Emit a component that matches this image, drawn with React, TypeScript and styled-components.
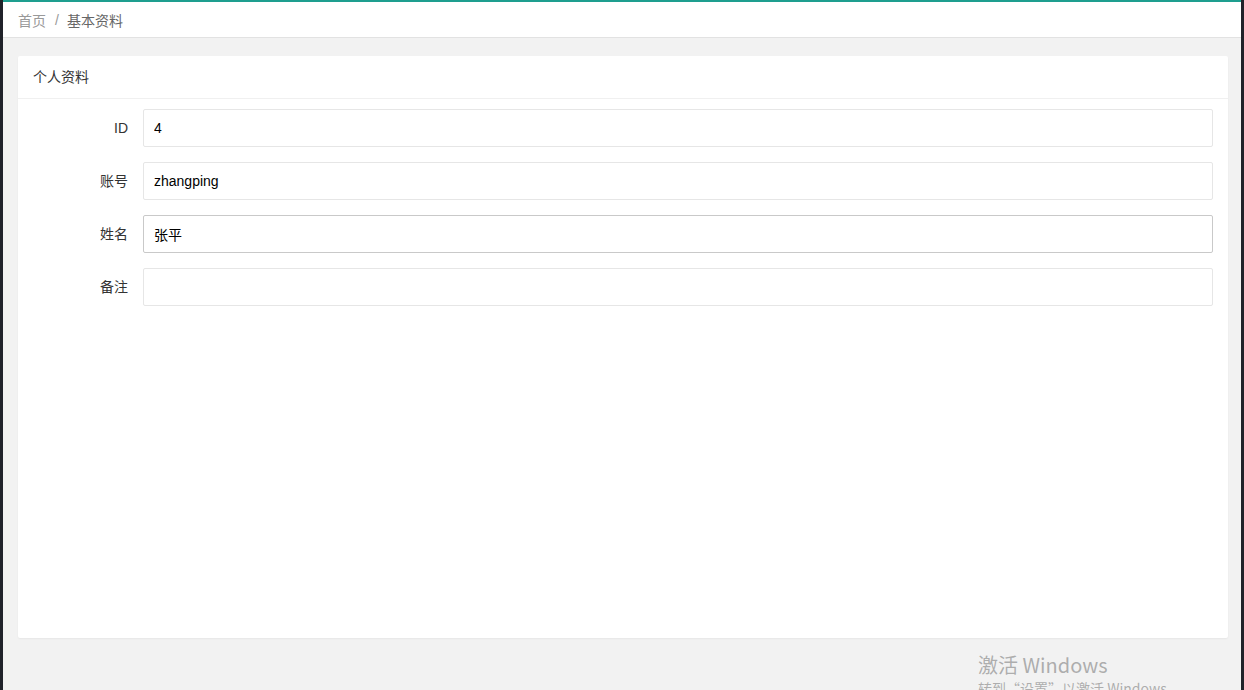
import React from 'react';
import styled, { createGlobalStyle } from 'styled-components';

const GlobalStyle = createGlobalStyle`
  html, body {
    margin: 0;
    padding: 0;
    height: 100%;
    overflow: hidden;
  }
  body {
    font-family: "Liberation Sans", "Noto Sans CJK SC", sans-serif;
    font-size: 14px;
    color: #333;
    background: #20222a;
  }
`;

const Shell = styled.div`
  display: flex;
  height: 690px;
  padding: 0 3px;
  background: #20222a;
`;

const Main = styled.div`
  flex: 1;
  display: flex;
  flex-direction: column;
  background: #f2f2f2;
  position: relative;
`;

const Header = styled.div`
  height: 35px;
  border-top: 2px solid #1e9e8f;
  border-bottom: 1px solid #e2e2e2;
  background: #fff;
  display: flex;
  align-items: center;
  padding: 0 15px;
`;

const Crumb = styled.span<{ $current?: boolean }>`
  color: ${p => (p.$current ? '#666' : '#999')};
  font-size: 14px;
`;

const Sep = styled.span`
  color: #999;
  margin: 0 8px 0 9px;
`;

const Content = styled.div`
  flex: 1;
  padding: 18px 13px 0 15px;
`;

const Card = styled.div`
  height: 582px;
  background: #fff;
  border-radius: 2px;
  box-shadow: 0 1px 2px rgba(0, 0, 0, 0.05);
`;

const CardHeader = styled.div`
  height: 42px;
  line-height: 42px;
  padding: 0 15px;
  border-bottom: 1px solid #f0f0f0;
  color: #333;
`;

const CardBody = styled.div`
  padding: 10px 15px;
`;

const FormItem = styled.div`
  display: flex;
  margin-bottom: 15px;
`;

const Label = styled.label`
  width: 80px;
  padding: 9px 15px;
  line-height: 20px;
  text-align: right;
  color: #333;
  flex-shrink: 0;
`;

const Input = styled.input<{ $hover?: boolean }>`
  flex: 1;
  height: 38px;
  box-sizing: border-box;
  border: 1px solid ${p => (p.$hover ? '#c9c9c9' : '#e6e6e6')};
  border-radius: 2px;
  padding-left: 10px;
  font-family: "Liberation Sans", "Noto Sans CJK SC", sans-serif;
  font-size: 14px;
  color: #000;
  background: #fff;
  outline: none;
`;

const Watermark = styled.div`
  position: absolute;
  left: 975px;
  top: 652px;
  color: rgba(150, 150, 150, 0.75);
  font-family: "Noto Sans CJK SC", "Liberation Sans", sans-serif;
  pointer-events: none;
`;

const WmTitle = styled.div`
  font-size: 20px;
  line-height: 26px;
`;

const WmSub = styled.div`
  font-size: 14px;
  line-height: 20px;
`;

const fields = [
  { label: 'ID', value: '4' },
  { label: '账号', value: 'zhangping' },
  { label: '姓名', value: '张平', hover: true },
  { label: '备注', value: '' },
];

export default function App() {
  return (
    <>
      <GlobalStyle />
      <Shell>
        <Main>
          <Header>
            <Crumb>首页</Crumb>
            <Sep>/</Sep>
            <Crumb $current>基本资料</Crumb>
          </Header>
          <Content>
            <Card>
              <CardHeader>个人资料</CardHeader>
              <CardBody>
                {fields.map(f => (
                  <FormItem key={f.label}>
                    <Label>{f.label}</Label>
                    <Input $hover={f.hover} defaultValue={f.value} />
                  </FormItem>
                ))}
              </CardBody>
            </Card>
          </Content>
          <Watermark>
            <WmTitle>激活 Windows</WmTitle>
            <WmSub>转到“设置”以激活 Windows。</WmSub>
          </Watermark>
        </Main>
      </Shell>
    </>
  );
}
